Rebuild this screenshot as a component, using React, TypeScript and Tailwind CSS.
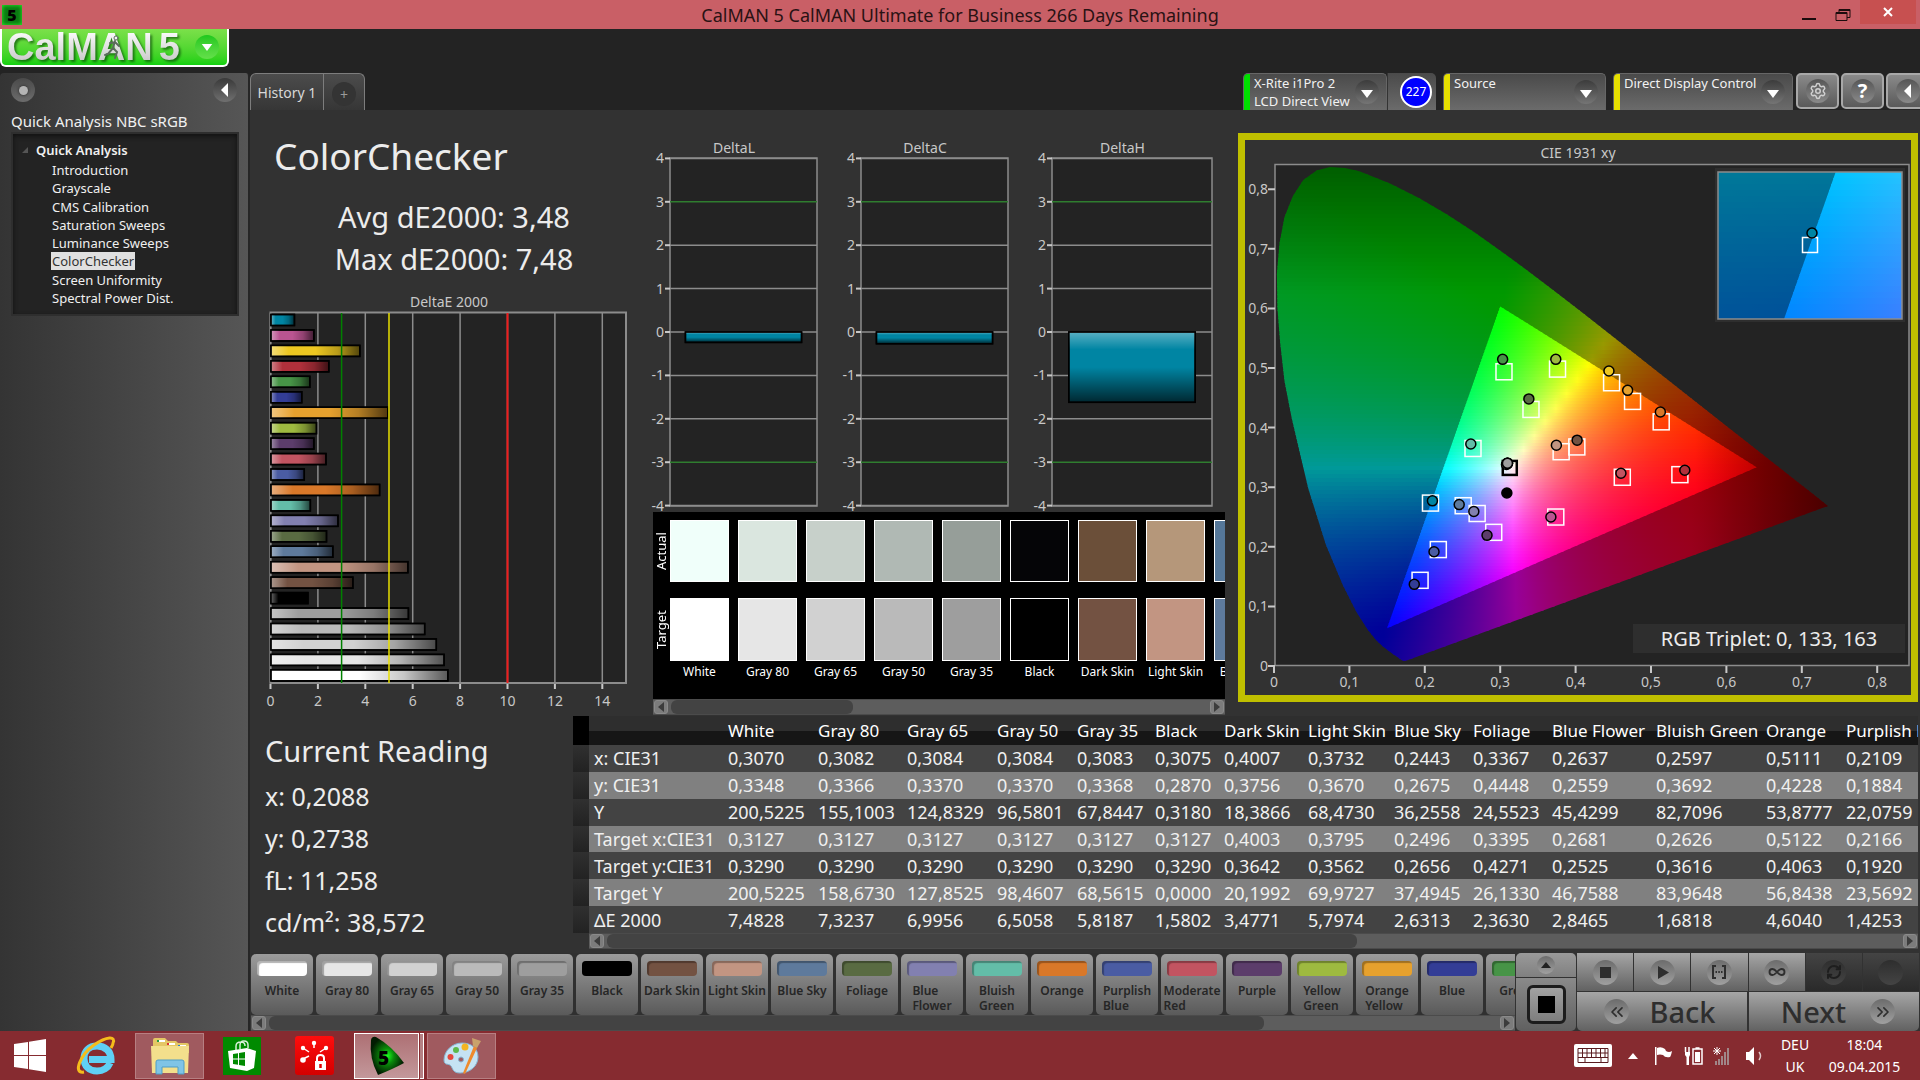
import { useState } from "react";
import type { ReactNode } from "react";
import { ChevronsLeft, ChevronsRight, Infinity as InfinityIcon, RefreshCw, Settings } from "lucide-react";

interface Patch {
  name: string;
  color: string;
  actual: string;
  de: number;
  xy: [number, number];
  target: [number, number];
}

const patches: Patch[] = [
  { name: "White", color: "#ffffff", actual: "#f0fffa", de: 7.4828, xy: [0.307, 0.3348], target: [0.3127, 0.329] },
  { name: "Gray 80", color: "#e6e6e6", actual: "#dae6df", de: 7.3237, xy: [0.3082, 0.3366], target: [0.3127, 0.329] },
  { name: "Gray 65", color: "#d1d1d1", actual: "#c7d0ca", de: 6.9956, xy: [0.3084, 0.337], target: [0.3127, 0.329] },
  { name: "Gray 50", color: "#bababa", actual: "#b0b9b4", de: 6.5058, xy: [0.3084, 0.337], target: [0.3127, 0.329] },
  { name: "Gray 35", color: "#9e9e9e", actual: "#969e99", de: 5.8187, xy: [0.3083, 0.3368], target: [0.3127, 0.329] },
  { name: "Black", color: "#000000", actual: "#050507", de: 1.5802, xy: [0.3075, 0.287], target: [0.3127, 0.329] },
  { name: "Dark Skin", color: "#735242", actual: "#6b4f39", de: 3.4771, xy: [0.4007, 0.3756], target: [0.4003, 0.3642] },
  { name: "Light Skin", color: "#c29582", actual: "#b5977a", de: 5.7974, xy: [0.3732, 0.367], target: [0.3795, 0.3562] },
  { name: "Blue Sky", color: "#5e7a9c", actual: "#557799", de: 2.6313, xy: [0.2443, 0.2675], target: [0.2496, 0.2656] },
  { name: "Foliage", color: "#596b42", actual: "#566b3c", de: 2.363, xy: [0.3367, 0.4448], target: [0.3395, 0.4271] },
  { name: "Blue Flower", color: "#8280b0", actual: "#7a7fae", de: 2.8465, xy: [0.2637, 0.2559], target: [0.2681, 0.2525] },
  { name: "Bluish Green", color: "#63bda8", actual: "#5cbfa5", de: 1.6818, xy: [0.2597, 0.3692], target: [0.2626, 0.3616] },
  { name: "Orange", color: "#d97829", actual: "#d07a20", de: 4.604, xy: [0.5111, 0.4228], target: [0.5122, 0.4063] },
  { name: "Purplish Blue", color: "#4a5ca3", actual: "#455ca3", de: 1.4253, xy: [0.2109, 0.1884], target: [0.2166, 0.192] },
  { name: "Moderate Red", color: "#c25461", actual: "#bb555e", de: 2.34, xy: [0.4588, 0.32], target: [0.4606, 0.3133] },
  { name: "Purple", color: "#5c3d6b", actual: "#573c6a", de: 1.83, xy: [0.2812, 0.2159], target: [0.2901, 0.2209] },
  { name: "Yellow Green", color: "#9eba40", actual: "#99bd38", de: 1.94, xy: [0.3724, 0.5112], target: [0.3747, 0.4948] },
  { name: "Orange Yellow", color: "#e6a12e", actual: "#dfa422", de: 4.95, xy: [0.4677, 0.4592], target: [0.4742, 0.4406] },
  { name: "Blue", color: "#333d96", actual: "#303c97", de: 1.32, xy: [0.1847, 0.1337], target: [0.1924, 0.1404] },
  { name: "Green", color: "#479447", actual: "#42963f", de: 1.66, xy: [0.3019, 0.5112], target: [0.3037, 0.4903] },
  { name: "Red", color: "#b0303b", actual: "#a83138", de: 2.46, xy: [0.5435, 0.325], target: [0.537, 0.3177] },
  { name: "Yellow", color: "#edc721", actual: "#e6c916", de: 3.77, xy: [0.4429, 0.4916], target: [0.4464, 0.4719] },
  { name: "Magenta", color: "#ba5491", actual: "#b4548f", de: 1.83, xy: [0.3659, 0.2466], target: [0.3724, 0.2466] },
  { name: "Cyan", color: "#0085a3", actual: "#0085a3", de: 1.01, xy: [0.2088, 0.2738], target: [0.2062, 0.27] },
];

const tableHead = ["White", "Gray 80", "Gray 65", "Gray 50", "Gray 35", "Black", "Dark Skin", "Light Skin", "Blue Sky", "Foliage", "Blue Flower", "Bluish Green", "Orange", "Purplish Blue"];

const colWidths = [
  "w-[134px]", "w-[90px]", "w-[89px]", "w-[90px]", "w-[80px]", "w-[78px]", "w-[69px]", "w-[84px]",
  "w-[86px]", "w-[79px]", "w-[79px]", "w-[104px]", "w-[110px]", "w-[80px]", "w-[114px]",
];

const tableRows = [
  { label: "x: CIE31", values: "0,3070 0,3082 0,3084 0,3084 0,3083 0,3075 0,4007 0,3732 0,2443 0,3367 0,2637 0,2597 0,5111 0,2109" },
  { label: "y: CIE31", values: "0,3348 0,3366 0,3370 0,3370 0,3368 0,2870 0,3756 0,3670 0,2675 0,4448 0,2559 0,3692 0,4228 0,1884" },
  { label: "Y", values: "200,5225 155,1003 124,8329 96,5801 67,8447 0,3180 18,3866 68,4730 36,2558 24,5523 45,4299 82,7096 53,8777 22,0759" },
  { label: "Target x:CIE31", values: "0,3127 0,3127 0,3127 0,3127 0,3127 0,3127 0,4003 0,3795 0,2496 0,3395 0,2681 0,2626 0,5122 0,2166" },
  { label: "Target y:CIE31", values: "0,3290 0,3290 0,3290 0,3290 0,3290 0,3290 0,3642 0,3562 0,2656 0,4271 0,2525 0,3616 0,4063 0,1920" },
  { label: "Target Y", values: "200,5225 158,6730 127,8525 98,4607 68,5615 0,0000 20,1992 69,9727 37,4945 26,1330 46,7588 83,9648 56,8438 23,5692" },
  { label: "ΔE 2000", values: "7,4828 7,3237 6,9956 6,5058 5,8187 1,5802 3,4771 5,7974 2,6313 2,3630 2,8465 1,6818 4,6040 1,4253" },
];

const pages = ["Introduction", "Grayscale", "CMS Calibration", "Saturation Sweeps", "Luminance Sweeps", "ColorChecker", "Screen Uniformity", "Spectral Power Dist."];

// CIE 1931 spectral locus, 380nm to 700nm
const locus: [number, number][] = [
  [0.1741, 0.005], [0.1714, 0.0051], [0.1689, 0.0069], [0.1644, 0.0109], [0.1566, 0.0177], [0.144, 0.0297], [0.1355, 0.0399],
  [0.1241, 0.0578], [0.1096, 0.0868], [0.0913, 0.1327], [0.0687, 0.2007], [0.0454, 0.295], [0.0235, 0.4127], [0.0139, 0.475],
  [0.0082, 0.5384], [0.0045, 0.598], [0.0039, 0.6548], [0.0073, 0.706], [0.0139, 0.7502], [0.025, 0.785], [0.0389, 0.812],
  [0.0565, 0.828], [0.0743, 0.8338], [0.0943, 0.832], [0.1142, 0.8262], [0.1547, 0.8059], [0.1929, 0.7816], [0.2296, 0.7543],
  [0.2658, 0.7243], [0.3016, 0.6923], [0.3373, 0.6589], [0.3731, 0.6245], [0.4087, 0.5896], [0.4441, 0.5547], [0.4788, 0.5202],
  [0.5125, 0.4866], [0.5448, 0.4544], [0.5752, 0.4242], [0.6029, 0.3965], [0.627, 0.3725], [0.6482, 0.3514], [0.6658, 0.334],
  [0.6915, 0.3083], [0.714, 0.2859], [0.7347, 0.2653],
];

const srgb: [number, number][] = [[0.64, 0.33], [0.3, 0.6], [0.15, 0.06]];

function xyColor(x: number, y: number, level: number) {
  const yy = Math.max(y, 0.005);
  const X = x / yy;
  const Z = (1 - x - yy) / yy;
  const rgb = [
    3.2406 * X - 1.5372 - 0.4986 * Z,
    -0.9689 * X + 1.8758 + 0.0415 * Z,
    0.0557 * X - 0.204 + 1.057 * Z,
  ].map((v) => Math.max(v, 0));
  const top = Math.max(...rgb);
  let k = level;
  if (x > 0.56) k *= 1 - (x - 0.56) * 3;
  if (y > 0.62) k *= 1 - (y - 0.62) * 1.8;
  const [r, g, b] = rgb.map((v) => Math.round((v / top) * 255 * k));
  return `rgb(${r},${g},${b})`;
}

interface FieldProps {
  id: string;
  left: number;
  top: number;
  width: number;
  height: number;
  toXY: (px: number, py: number) => [number, number];
  level: number;
  clip: string;
  rowHeight: number;
}

function ColorField({ id, left, top, width, height, toXY, level, clip, rowHeight }: FieldProps) {
  const rows = Math.ceil(height / rowHeight);
  const steps = Math.ceil(width / 11);
  return (
    <g clipPath={`url(#${clip})`}>
      {Array.from({ length: rows }, (_, r) => {
        const py = top + r * rowHeight;
        return (
          <g key={r}>
            <linearGradient id={`${id}-${r}`}>
              {Array.from({ length: steps + 1 }, (_, s) => {
                const [x, y] = toXY(left + (width * s) / steps, py + rowHeight / 2);
                return <stop key={s} offset={s / steps} stopColor={xyColor(x, y, level)} />;
              })}
            </linearGradient>
            <rect x={left} y={py} width={width} height={rowHeight + 1} fill={`url(#${id}-${r})`} />
          </g>
        );
      })}
    </g>
  );
}

function CieChart() {
  const px = (x: number) => 36 + x * 754;
  const py = (y: number) => 531 - y * 596;
  const toXY = (a: number, b: number): [number, number] => [(a - 36) / 754, (531 - b) / 596];
  const zoomX = (x: number) => 567 + (x - 0.207) * 754 * 5;
  const zoomY = (y: number) => 112 - (y - 0.27) * 596 * 5;
  const zoomToXY = (a: number, b: number): [number, number] => [0.207 + (a - 567) / 3770, 0.27 - (b - 112) / 2980];
  const points = (list: [number, number][]) => list.map(([x, y]) => `${px(x).toFixed(1)},${py(y).toFixed(1)}`).join(" ");
  const cyan = patches[patches.length - 1];

  return (
    <svg viewBox="0 0 680 569" className="block h-auto w-full" fontSize="14" fill="#c8c8c8" role="img" aria-label="CIE 1931 xy">
      <defs>
        <clipPath id="locus"><polygon points={points(locus)} /></clipPath>
        <clipPath id="gamut"><polygon points={points(srgb)} /></clipPath>
        <clipPath id="inset"><rect x="480" y="39" width="184" height="147" /></clipPath>
        <clipPath id="inset-gamut">
          <polygon points={`${zoomX(0.15)},${zoomY(0.06)} ${zoomX(0.3)},${zoomY(0.6)} 664,-900 664,900`} />
        </clipPath>
      </defs>
      <rect x="3.5" y="3.5" width="673" height="562" fill="#323232" stroke="#bfbf00" strokeWidth="7" />
      <text x="340" y="25" textAnchor="middle">CIE 1931 xy</text>
      <rect x="37" y="31.5" width="634" height="501" fill="#232323" stroke="#8c8c8c" strokeWidth="1.5" />
      <ColorField id="outer" left={36} top={33} width={560} height={498} toXY={toXY} level={0.6} clip="locus" rowHeight={4} />
      <ColorField id="inner" left={146} top={172} width={376} height={325} toXY={toXY} level={1} clip="gamut" rowHeight={3} />

      {[0, 1, 2, 3, 4, 5, 6, 7, 8].map((n) => (
        <g key={n}>
          <path d={`M${px(n / 10)} 533v7M${30} ${py(n / 10) + 2}h7`} stroke="#c8c8c8" strokeWidth="2" />
          <text x={px(n / 10)} y="554" textAnchor="middle">{n ? `0,${n}` : "0"}</text>
          <text x="30" y={py(n / 10) + 7} textAnchor="end">{n ? `0,${n}` : "0"}</text>
        </g>
      ))}

      {patches.slice(6).map((p) => (
        <rect key={p.name} x={px(p.target[0]) - 7} y={py(p.target[1]) - 8} width="16" height="16" fill="none" stroke="#fff" strokeWidth="1.5" />
      ))}
      <rect x={px(0.3127) - 7} y={py(0.329) - 7} width="14" height="14" fill="none" stroke="#000" strokeWidth="2.5" />
      {patches.map((p) => (
        <circle key={p.name} cx={px(p.xy[0]) + 1} cy={py(p.xy[1])} r="5" fill={p.color} stroke="#000" strokeWidth="1.5" />
      ))}

      <rect x="477" y="35" width="190" height="154" fill="#2e2e2e" />
      <g clipPath="url(#inset)">
        <ColorField id="zoomed-out" left={480} top={39} width={184} height={147} toXY={zoomToXY} level={0.6} clip="inset" rowHeight={6} />
        <ColorField id="zoomed-in" left={480} top={39} width={184} height={147} toXY={zoomToXY} level={1} clip="inset-gamut" rowHeight={6} />
      </g>
      <rect x="480" y="39" width="184" height="147" fill="none" stroke="#8c8c8c" strokeWidth="1.5" />
      <rect x="564.5" y="104.5" width="15" height="15" fill="none" stroke="#fff" strokeWidth="1.5" />
      <circle cx="574" cy="100" r="5" fill={cyan.color} stroke="#000" strokeWidth="1.5" />

      <rect x="395" y="491" width="272" height="29" fill="#2e2e2e" />
      <text x="531" y="513" textAnchor="middle" fontSize="20" fill="#ececec">RGB Triplet: 0, 133, 163</text>
    </svg>
  );
}

function DeltaEChart() {
  const px = (v: number) => 20.5 + v * 23.7;
  return (
    <svg viewBox="0 0 400 425" className="block h-auto w-full" fontSize="14" fill="#c8c8c8" role="img" aria-label="DeltaE 2000">
      <defs>
        <linearGradient id="shade-x">
          <stop offset="0" stopColor="#fff" stopOpacity="0.4" />
          <stop offset="0.2" stopColor="#fff" stopOpacity="0" />
          <stop offset="0.5" stopColor="#000" stopOpacity="0" />
          <stop offset="0.75" stopColor="#000" stopOpacity="0.22" />
          <stop offset="1" stopColor="#000" stopOpacity="0.65" />
        </linearGradient>
      </defs>
      <text x="199" y="17" textAnchor="middle">DeltaE 2000</text>
      <rect x="20.5" y="22.5" width="355.5" height="370.5" fill="#232323" stroke="#8c8c8c" strokeWidth="2" />
      {[0, 2, 4, 6, 8, 10, 12, 14].map((n) => (
        <g key={n}>
          <path d={`M${px(n)} 23v370`} stroke="#8c8c8c" strokeWidth="1.5" />
          <path d={`M${px(n)} 394v5`} stroke="#c8c8c8" strokeWidth="2" />
          <text x={px(n)} y="416" textAnchor="middle">{n}</text>
        </g>
      ))}
      {[...patches].reverse().map((p, i) => (
        <g key={p.name} stroke="#000" strokeWidth="1.5">
          <rect x="21" y={24.5 + i * 15.45} width={p.de * 23.7 - 0.5} height="11" fill={p.color} />
          <rect x="21" y={24.5 + i * 15.45} width={p.de * 23.7 - 0.5} height="11" fill="url(#shade-x)" />
        </g>
      ))}
      <path d={`M${px(3)} 23v370`} stroke="#008000" strokeWidth="1.5" />
      <path d={`M${px(5)} 23v370`} stroke="#e8e000" strokeWidth="1.5" />
      <path d={`M${px(10)} 23v370`} stroke="#f01c1c" strokeWidth="2" />
    </svg>
  );
}

function DeltaChart({ title, value, width }: { title: string; value: number; width: number }) {
  const plot = width - 21;
  const py = (v: number) => 194 - v * 43.4;
  return (
    <svg viewBox={`0 0 ${width} 374`} className="block h-auto w-full overflow-visible" fontSize="14" fill="#c8c8c8" role="img" aria-label={title}>
      <defs>
        <linearGradient id="shade-y" x2="0" y2="1">
          <stop offset="0" stopColor="#fff" stopOpacity="0.35" />
          <stop offset="0.25" stopColor="#fff" stopOpacity="0" />
          <stop offset="0.5" stopColor="#000" stopOpacity="0" />
          <stop offset="1" stopColor="#000" stopOpacity="0.7" />
        </linearGradient>
      </defs>
      <text x={width / 2} y="15" textAnchor="middle">{title}</text>
      <rect x="20" y="20" width={plot} height="348" fill="#232323" stroke="#8c8c8c" strokeWidth="1.5" />
      {[4, 3, 2, 1, 0, -1, -2, -3, -4].map((n) => (
        <g key={n}>
          <path d={`M20 ${py(n)}h${plot}`} stroke={Math.abs(n) === 3 ? "#2f7d2f" : "#8c8c8c"} strokeWidth="1.5" />
          <path d={`M15 ${py(n)}h5`} stroke="#c8c8c8" strokeWidth="2" />
          <text x="14" y={py(n) + 5} textAnchor="end">{n}</text>
        </g>
      ))}
      <g stroke="#000" strokeWidth="1.5">
        <rect x={20 + plot * 0.105} y="194" width={plot * 0.79} height={-value * 43.4} fill="#0085a3" />
        <rect x={20 + plot * 0.105} y="194" width={plot * 0.79} height={-value * 43.4} fill="url(#shade-y)" />
      </g>
    </svg>
  );
}

function Scrollbar({ thumb, label }: { thumb: string; label: string }) {
  return (
    <div className="flex h-4 items-center gap-[3px] border-y border-[#4b4b4b] bg-[#5d5d5d] px-px" role="group" aria-label={label}>
      <button aria-label="Scroll left" className="flex h-[14px] w-[14px] items-center justify-center rounded-[3px] border border-[#8a8a8a] bg-[#7c7c7c]">
        <svg viewBox="0 0 8 10" className="h-[10px] w-2"><path d="M7 0v10L1 5z" fill="#3c3c3c" /></svg>
      </button>
      <div className="h-full flex-1">
        <div className={`h-full rounded-[6px] bg-[#434343] ${thumb}`} />
      </div>
      <button aria-label="Scroll right" className="flex h-[14px] w-[14px] items-center justify-center rounded-[3px] border border-[#8a8a8a] bg-[#7c7c7c]">
        <svg viewBox="0 0 8 10" className="h-[10px] w-2"><path d="M1 0v10l6-5z" fill="#3c3c3c" /></svg>
      </button>
    </div>
  );
}

function TitleBar() {
  return (
    <header className="flex h-[29px] items-center justify-between bg-[#c95f66] text-[#2a1214]">
      <div className="w-[136px] pl-0.5">
        <div className="flex h-5 w-5 items-center justify-center bg-[#0c7a12] text-[16px] leading-5 font-black text-black shadow-[inset_0_0_4px_#2bff2b]">5</div>
      </div>
      <h1 className="text-[18px] leading-6">CalMAN 5 CalMAN Ultimate for Business 266 Days Remaining</h1>
      <div className="flex h-full w-[136px] justify-end">
        <button aria-label="Minimize" className="flex w-[34px] items-center justify-center">
          <svg viewBox="0 0 14 14" className="h-[14px] w-[14px]"><path d="M0 11h14" stroke="#1c0c0d" strokeWidth="2" /></svg>
        </button>
        <button aria-label="Restore" className="flex w-[34px] items-center justify-center">
          <svg viewBox="0 0 16 14" className="h-[14px] w-4" fill="none" stroke="#1c0c0d"><path d="M1 4.500h11v8H1zM1 5.500h11M4 4V1.500h11v8h-3M4 2.500h11" /></svg>
        </button>
        <button aria-label="Close" className="mr-1 flex h-[24px] w-[56px] items-center justify-center bg-[#c75050]">
          <svg viewBox="0 0 10 10" className="h-[10px] w-[10px]"><path d="M1 1l8 8M9 1L1 9" stroke="#fff" strokeWidth="2" /></svg>
        </button>
      </div>
    </header>
  );
}

function DownArrow({ label }: { label: string }) {
  return (
    <button aria-label={label} className="flex h-6 w-6 shrink-0 items-center justify-center rounded-full bg-linear-to-b from-[#3c3c3c] to-[#757575]">
      <svg viewBox="0 0 12 8" className="mt-1 h-2 w-3"><path d="M0 0h12L6 8z" fill="#fff" /></svg>
    </button>
  );
}

function DeviceTab({ strip, width, label, children }: { strip: string; width: string; label: string; children: ReactNode }) {
  return (
    <div className={`flex h-full rounded-t-[5px] border border-b-0 border-[#666] bg-linear-to-b from-[#4a4a4a] to-[#6b6b6b] ${width}`}>
      <div className={`w-[6px] rounded-tl-[4px] ${strip}`} />
      <div className="flex-1 pl-1 text-[13px] leading-[18px] whitespace-nowrap text-[#f2f2f2]">{children}</div>
      <div className="flex items-center pr-[7px]">
        <DownArrow label={label} />
      </div>
    </div>
  );
}

function RoundButton({ label, children }: { label: string; children: ReactNode }) {
  return (
    <button aria-label={label} className="flex h-9 w-[43px] shrink-0 items-center justify-center rounded-[5px] border-2 border-[#a8a8a8] bg-linear-to-b from-[#8a8a8a] to-[#5a5a5a]">
      <span className="flex h-6 w-6 items-center justify-center rounded-full bg-linear-to-b from-[#565656] to-[#8a8a8a] text-[20px] leading-6 font-bold text-white">
        {children}
      </span>
    </button>
  );
}

function TabBar() {
  return (
    <div className="flex h-[37px] justify-between">
      <div className="flex rounded-t-[6px] border border-b-0 border-[#7d7d7d] bg-linear-to-b from-[#4c4c4c] to-[#363636] text-[14px] text-[#d8d8d8]">
        <button className="w-[73px] border-r border-[#7d7d7d]">History 1</button>
        <button aria-label="Add history" className="flex w-[40px] items-center justify-center">
          <span className="mt-1 flex h-6 w-6 items-center justify-center rounded-full bg-[#343434] text-[#9a9a9a]">+</span>
        </button>
      </div>
      <div className="flex gap-[7px] overflow-hidden">
        <div className="flex">
          <DeviceTab strip="bg-[#00e000]" width="w-[144px]" label="Meter menu">
            X-Rite i1Pro 2
            <br />
            LCD Direct View
          </DeviceTab>
          <div className="flex w-[49px] items-center justify-center rounded-tr-[5px] border-l border-[#333] bg-linear-to-b from-[#4a4a4a] to-[#6b6b6b] pl-2">
            <div className="flex h-8 w-8 items-center justify-center rounded-full border-2 border-white bg-[#0000ff] text-[12px] text-white">227</div>
          </div>
        </div>
        <DeviceTab strip="bg-[#e6e000]" width="w-[163px]" label="Source menu">Source</DeviceTab>
        <DeviceTab strip="bg-[#e6e000]" width="w-[180px]" label="Display menu">Direct Display Control</DeviceTab>
        <div className="-ml-1 flex w-[124px] gap-[2px] overflow-hidden">
          <RoundButton label="Settings"><Settings className="h-[18px] w-[18px] text-[#d0d0d0]" /></RoundButton>
          <RoundButton label="Help">?</RoundButton>
          <RoundButton label="Collapse">
            <svg viewBox="0 0 8 14" className="h-[14px] w-2"><path d="M7 0v14L0 7z" fill="#fff" /></svg>
          </RoundButton>
        </div>
      </div>
    </div>
  );
}

function Sidebar({ page, onSelect }: { page: string; onSelect: (p: string) => void }) {
  return (
    <aside className="w-[250px] shrink-0 rounded-t-[4px] border-r-2 border-[#262626] bg-linear-to-r from-[#343434] to-[#565656] px-[11px]">
      <div className="flex justify-between pt-[5px]">
        <button aria-label="Record" className="flex h-6 w-6 items-center justify-center rounded-full bg-linear-to-b from-[#4a4a4a] to-[#6c6c6c]">
          <span className="h-[9px] w-[9px] rounded-full bg-[#b4b4b4] shadow-[0_0_3px_#222]" />
        </button>
        <button aria-label="Collapse sidebar" className="flex h-6 w-6 items-center justify-center rounded-full bg-linear-to-b from-[#3a3a3a] to-[#707070]">
          <svg viewBox="0 0 8 14" className="h-[14px] w-2"><path d="M7 0v14L0 7z" fill="#fff" /></svg>
        </button>
      </div>
      <h2 className="mt-2 text-[15px] leading-[22px] whitespace-nowrap text-[#f0f0f0]">Quick Analysis NBC sRGB</h2>
      <nav className="-mr-0.5 h-[184px] border-2 border-[#2e2e2e] bg-[#232323] text-[13px] leading-[18px] text-[#f0f0f0] shadow-[inset_0_2px_5px_#111]">
        <div className="flex items-center gap-2 pt-[7px] pl-[9px] font-semibold">
          <svg viewBox="0 0 6 6" className="h-[6px] w-[6px]"><path d="M6 0v6H0z" fill="#555" /></svg>
          Quick Analysis
        </div>
        <ul className="mt-[2px] grid h-[146px] auto-rows-fr pl-[39px]">
          {pages.map((p) => (
            <li key={p} className="flex items-center">
              <a
                href="#"
                onClick={() => onSelect(p)}
                className={p === page ? "-mx-px bg-[#e0e0e0] px-px text-[#333]" : ""}
              >
                {p}
              </a>
            </li>
          ))}
        </ul>
      </nav>
    </aside>
  );
}

function Swatches() {
  return (
    <div className="mr-[13px] ml-[3px]">
      <div className="flex h-[187px] overflow-hidden bg-black pt-2 text-[12px] text-white">
        <div className="flex w-[17px] shrink-0 flex-col gap-4 text-[13px] leading-[17px]">
          <div className="h-[62px] rotate-180 text-center [writing-mode:vertical-rl]">Actual</div>
          <div className="h-[63px] rotate-180 text-center [writing-mode:vertical-rl]">Target</div>
        </div>
        {patches.slice(0, 9).map((p) => (
          <div key={p.name} className="w-[68px] shrink-0">
            <div className="h-[62px] w-[59px] border border-white" style={{ backgroundColor: p.actual }} />
            <div className="mt-4 h-[63px] w-[59px] border border-white" style={{ backgroundColor: p.color }} />
            <div className="-mx-1 w-[67px] text-center leading-[22px] whitespace-nowrap">{p.name}</div>
          </div>
        ))}
      </div>
      <Scrollbar thumb="w-[34%]" label="Swatch scroll" />
    </div>
  );
}

function ReadingsTable() {
  return (
    <div className="min-w-0 flex-1 overflow-hidden pr-[2px]">
      <div className="overflow-hidden">
        <table className="h-[217px] w-[1366px] table-fixed border-collapse text-left text-[18px] leading-6 text-[#f0f0f0]">
          <colgroup>
            <col className="w-4" />
            {colWidths.map((w, i) => <col key={i} className={w} />)}
          </colgroup>
          <thead>
            <tr className="h-[29px] bg-linear-to-b from-[#2e2e2e] from-50% to-[#161616] to-50% text-[17px] text-white">
              <td className="bg-black" />
              <td />
              {tableHead.map((h) => (
                <th key={h} scope="col" className="pl-[5px] font-normal whitespace-nowrap">{h}</th>
              ))}
            </tr>
          </thead>
          <tbody>
            {tableRows.map((row, i) => (
              <tr key={row.label} className={i % 2 ? "bg-[#808080]" : "bg-[#434343]"}>
                <td className="bg-linear-to-b from-[#303030] to-[#222]" />
                <th scope="row" className="pl-[5px] font-normal whitespace-nowrap">{row.label}</th>
                {row.values.split(" ").map((v, j) => (
                  <td key={j} className="pl-[5px] whitespace-nowrap">{v}</td>
                ))}
              </tr>
            ))}
          </tbody>
        </table>
      </div>
      <div className="ml-4">
        <Scrollbar thumb="w-[58%]" label="Table scroll" />
      </div>
    </div>
  );
}

function Disc({ size, children }: { size: string; children?: ReactNode }) {
  return <span className={`flex items-center justify-center rounded-full bg-linear-to-b from-[#6c6c6c] to-[#a0a0a0] ${size}`}>{children}</span>;
}

function Transport() {
  const button = "flex items-center justify-center bg-linear-to-b from-[#a6a6a6] to-[#626262] text-[#2e2e2e]";
  const off = "flex items-center justify-center bg-linear-to-b from-[#444] to-[#2a2a2a] text-[#1e1e1e]";
  const dim = "flex h-[25px] w-[25px] items-center justify-center rounded-full bg-linear-to-b from-[#2e2e2e] to-[#444]";
  return (
    <div className="flex shrink-0 gap-px pr-px">
      <div className="flex w-[60px] flex-col gap-px">
        <button aria-label="Expand" className="flex h-6 items-center justify-center rounded-t-[5px] bg-linear-to-b from-[#9a9a9a] to-[#808080]">
          <Disc size="h-[18px] w-[18px]">
            <svg viewBox="0 0 10 6" className="h-[6px] w-[10px]"><path d="M0 6h10L5 0z" fill="#222" /></svg>
          </Disc>
        </button>
        <button aria-label="Pattern window" className="flex flex-1 items-center justify-center rounded-b-[5px] bg-linear-to-b from-[#8a8a8a] to-[#606060]">
          <span className="flex h-[39px] w-[39px] items-center justify-center rounded-[6px] border-[3px] border-[#1c1c1c] bg-linear-to-b from-[#a2a2a2] to-[#7e7e7e]">
            <span className="h-[17px] w-[17px] bg-black" />
          </span>
        </button>
      </div>
      <div className="flex w-[342px] flex-col gap-px">
        <div className="grid h-[38px] grid-cols-6 gap-px">
          <button aria-label="Stop" className={button}><Disc size="h-[25px] w-[25px]"><span className="h-[11px] w-[11px] bg-[#2e2e2e]" /></Disc></button>
          <button aria-label="Play" className={button}>
            <Disc size="h-[25px] w-[25px]"><svg viewBox="0 0 12 14" className="ml-0.5 h-[13px] w-[11px]"><path d="M0 0l12 7-12 7z" fill="#2e2e2e" /></svg></Disc>
          </button>
          <button aria-label="Step" className={button}>
            <Disc size="h-[25px] w-[25px]">
              <svg viewBox="0 0 16 14" className="h-[14px] w-4" fill="none" stroke="#2e2e2e" strokeWidth="2"><path d="M5 1H2v12h3M11 1h3v12h-3M4.500 7h1.500M7.300 7h1.500M10 7h1.500" /></svg>
            </Disc>
          </button>
          <button aria-label="Loop" className={button}><Disc size="h-[25px] w-[25px]"><InfinityIcon className="h-[18px] w-[18px]" strokeWidth={2.5} /></Disc></button>
          <button aria-label="Refresh" className={off}><span className={dim}><RefreshCw className="h-4 w-4" strokeWidth={3} /></span></button>
          <button aria-label="Record" className={off}><span className={dim} /></button>
        </div>
        <div className="grid flex-1 grid-cols-2 gap-[2px] text-[29px] leading-8 font-medium">
          <button className={`${button} gap-5 rounded-bl-[5px] pr-1`}>
            <Disc size="h-[25px] w-[25px]"><ChevronsLeft className="h-5 w-5" /></Disc>
            Back
          </button>
          <button className={`${button} gap-6 rounded-br-[5px] pl-2`}>
            Next
            <Disc size="h-[25px] w-[25px]"><ChevronsRight className="h-5 w-5" /></Disc>
          </button>
        </div>
      </div>
    </div>
  );
}

function PatchStrip() {
  const [selected, setSelected] = useState("");
  return (
    <div className="mt-auto flex h-[78px] gap-px pl-px">
      <div className="flex min-w-0 flex-1 flex-col bg-[#303030]">
        <div className="flex flex-1 gap-[3px] overflow-hidden pt-px">
          {patches.slice(0, 20).map((p) => (
            <button
              key={p.name}
              onClick={() => setSelected(p.name)}
              className={`flex w-[62px] shrink-0 flex-col items-center rounded-[5px] bg-linear-to-b from-[#9c9c9c] to-[#5a5a5a] pt-[7px] ${selected === p.name ? "brightness-110" : ""}`}
            >
              <span className="h-[15px] w-[50px] rounded-[4px] shadow-[inset_2px_2px_1px_rgba(0,0,0,0.3)]" style={{ backgroundColor: p.color }} />
              <span className="mt-[7px] text-left text-[12px] leading-[15px] font-semibold text-[#262626]">
                {p.name.includes("Skin") || p.name.includes("Gray") || p.name.includes("Sky") ? (
                  <span className="whitespace-nowrap">{p.name}</span>
                ) : (
                  p.name.split(" ").map((word) => <span key={word} className="block">{word}</span>)
                )}
              </span>
            </button>
          ))}
        </div>
        <Scrollbar thumb="w-[81%]" label="Patch scroll" />
      </div>
      <Transport />
    </div>
  );
}

function Taskbar() {
  return (
    <footer className="flex h-[49px] items-center justify-between bg-[#862b30] text-white">
      <div className="flex h-full items-center">
        <button aria-label="Start" className="flex w-[60px] justify-center">
          <svg viewBox="0 0 32 33" className="h-[33px] w-8" fill="#fff"><path d="M0 5l14-2v13H0zM15 2.800L32 0v16H15zM0 17h14v13L0 28zM15 17h17v16l-17-2.800z" /></svg>
        </button>
        <button aria-label="Internet Explorer" className="flex w-[75px] justify-center pr-1">
          <svg viewBox="0 0 40 40" className="h-[40px] w-[40px]" fill="none">
            <path d="M34 27c-2 5-7 8-13 8-8 0-13-5-13-12.500S13 10 21 10s14 5 14 13.500H13" stroke="#5fd0f5" strokeWidth="7" />
            <path d="M8 36C-4 38 5 18 18 9S40 0 37 7c0 2-1 3-2 5" stroke="#f5bc1b" strokeWidth="3" />
          </svg>
        </button>
        <button aria-label="File Explorer" className="flex h-[46px] w-[69px] items-center justify-center border border-[#b77f82] bg-[#a05a5f]">
          <svg viewBox="0 0 40 38" className="h-[38px] w-10">
            <path d="M3 3q0-2 2-2h10l3 3h8l2 2h9q2 0 2 2v8H3z" fill="#e4c765" />
            <path d="M7 3h8v2H7zM17 6h8v2h-8zM28 8h8v2h-8z" fill="#fff" />
            <path d="M7 3h2v2H7z" fill="#2a9d44" /><path d="M17 6h2v2h-2z" fill="#d33" /><path d="M28 8h2v2h-2z" fill="#2b7fd0" />
            <path d="M1 9h38l-1 27H2z" fill="#f3df8c" />
            <path d="M6 25q0-2 2-2h24q2 0 2 2v12h-6v-7H12v7H6z" fill="#7fc4e6" stroke="#4f9dc6" />
          </svg>
        </button>
        <button aria-label="Store" className="ml-[19px] flex h-[38px] w-[38px] items-center justify-center bg-[#008a00]">
          <svg viewBox="0 0 30 32" className="h-8 w-[30px]">
            <path d="M9 10V6q0-4 5-4 4 0 4 4M13 9V5q0-4 4-4t4 4v3" fill="none" stroke="#d8f0d8" strokeWidth="1.500" />
            <path d="M1 11l19-3 9 3-2 17-7 3-17-3z" fill="#fff" />
            <path d="M6 14l5-.8v5.300H6zM12 13l6-1v6.500h-6zM6 19.500h5v5.300L6 24zM12 19.500h6V26l-6-1z" fill="#008a00" />
          </svg>
        </button>
        <button aria-label="Remote lock" className="ml-[34px] flex h-[39px] w-[39px] items-center justify-center rounded-[3px] bg-linear-to-b from-[#ff0d0d] to-[#d40000]">
          <svg viewBox="0 0 39 39" className="h-[39px] w-[39px]" fill="#fff" stroke="#fff">
            <path d="M19 7v5M8 12l6 4M31 12l-6 4M8 23l6-3" strokeWidth="1.500" />
            <g stroke="none"><circle cx="19" cy="7" r="2.200" /><circle cx="8" cy="12" r="2.200" /><circle cx="31" cy="12" r="2.200" /><circle cx="8" cy="24" r="2.800" /></g>
            <rect x="20" y="25" width="11" height="9" stroke="none" />
            <path d="M22 25v-3q0-3 3.500-3t3.500 3v3" fill="none" strokeWidth="2" />
            <path d="M25.500 28v4" stroke="#d00" strokeWidth="2.500" />
          </svg>
        </button>
        <div className="ml-5 flex h-[46px] gap-px">
          <button aria-label="CalMAN 5" className="flex w-[65px] items-center justify-center border border-white bg-linear-to-b from-[#ad7074] to-[#c3989b]">
            <svg viewBox="0 0 36 40" className="h-10 w-9">
              <defs><radialGradient id="tri"><stop offset="0" stopColor="#1fff1f" /><stop offset="0.400" stopColor="#0a8a0a" /><stop offset="1" stopColor="#021c02" /></radialGradient></defs>
              <path d="M2 4Q3 0 7 1q16 9 28 26-11 6-26 12Q0 22 2 4z" fill="url(#tri)" />
              <text x="9" y="29" fontSize="19" fontWeight="900">5</text>
            </svg>
          </button>
          <div className="w-1 border border-l-0 border-white bg-[#b58084]" />
        </div>
        <button aria-label="Paint" className="ml-[3px] flex h-[46px] w-[69px] items-center justify-center border border-[#b77f82] bg-[#a05a5f]">
          <svg viewBox="0 0 38 38" className="h-[38px] w-[38px]">
            <path d="M19 6C9 6 1 14 1 23c0 6 5 3 7 6s2 7 9 7c10 0 18-7 18-16S28 6 19 6zm-1 14a2.500 2.500 0 110 5 2.500 2.500 0 010-5z" fill="#c5e2f3" stroke="#86b5d2" />
            <circle cx="7.500" cy="20" r="3" fill="#e5473c" /><circle cx="13" cy="13" r="3" fill="#5cb84a" /><circle cx="22" cy="10" r="3.500" fill="#f3b321" />
            <path d="M31 9l3 2-12 26-2-1z" fill="#ee8a2c" />
            <path d="M29 1l9 3-4 7-4-2z" fill="#c9a26b" />
          </svg>
        </button>
      </div>
      <div className="flex h-full items-center">
        <svg viewBox="0 0 38 23" className="mr-4 h-[23px] w-[38px]">
          <rect width="38" height="23" rx="2" fill="#fff" />
          <path d="M4 4.500h30v14H4zM4 9h30M4 13.500h30M8.500 4.500v9M13 4.500v9M17.500 4.500v9M22 4.500v9M26.500 4.500v9M31 4.500v9M11 14v5M27 14v5" fill="none" stroke="#5a1c20" />
        </svg>
        <svg viewBox="0 0 10 6" className="mr-4 h-[6px] w-[10px]"><path d="M0 6h10L5 0z" fill="#fff" /></svg>
        <svg viewBox="0 0 19 20" className="mr-[11px] h-5 w-[19px]"><path d="M1 1h1.500v18H1zM3 2q4-2 8 1l1 2q3 2 6 0-1 5-2 6-5 1-7-2-3-1-6 0z" fill="#fff" /></svg>
        <svg viewBox="0 0 19 20" className="mr-[10px] h-5 w-[19px]" fill="none" stroke="#fff" strokeWidth="1.500">
          <path d="M1.500 1v5M5 1v5M9 3h9v15H9zM11.500 2h4" /><path d="M1 6h5v3l-1 2v8H2.500v-8L1 9z" fill="#fff" stroke="none" /><path d="M11 6h5v10h-5z" fill="#fff" stroke="none" />
        </svg>
        <svg viewBox="0 0 18 20" className="mr-[14px] h-5 w-[18px]">
          <path d="M2 15h2v4H2zM5 13h2v6H5zM8 10h2v9H8zM11 6h2v13h-2zM14 2h2v17h-2z" fill="#a08688" />
          <path d="M4 1v8M0 5h8M1 2l6 6M7 2L1 8" stroke="#fff" />
        </svg>
        <svg viewBox="0 0 18 20" className="mr-[15px] h-5 w-[18px]"><path d="M1 6h3l5-5v18l-5-5H1z" fill="#fff" /><path d="M14 6q3 4 0 8" fill="none" stroke="#e0c8ca" strokeWidth="1.500" /></svg>
        <div className="w-[34px] text-center text-[14px] leading-[22px]">DEU<br />UK</div>
        <div className="ml-[15px] w-[75px] text-center text-[14px] leading-[22px]">18:04<br />09.04.2015</div>
        <div className="w-[18px]" />
      </div>
    </footer>
  );
}

function Logo() {
  const letters = "bg-linear-to-b from-white to-[#c4c4c4] bg-clip-text text-transparent drop-shadow-[2px_2px_1px_rgba(0,60,0,0.6)]";
  return (
    <button aria-label="CalMAN menu" className="relative flex h-[38px] w-[229px] items-center rounded-b-[6px] border-2 border-t-0 border-white bg-linear-to-b from-[#7be04a] to-[#10d010] pl-[5px] font-['Liberation_Sans',sans-serif] text-[38px] leading-[36px] font-bold">
      <span className={letters}>CalMAN</span>
      <span className={`ml-1.5 ${letters}`}>5</span>
      <span className="ml-[15px] flex h-6 w-6 items-center justify-center rounded-full bg-linear-to-b from-[#1cc81c] to-[#63e04a]">
        <svg viewBox="0 0 12 8" className="h-[7px] w-3"><path d="M0 0h12L6 8z" fill="#fff" /></svg>
      </span>
      {/* running figure over the second A */}
      <svg viewBox="0 0 22 28" className="absolute top-1 left-[101px] h-7 w-[22px]" fill="none" strokeLinecap="round">
        <path d="M12 8l-2 7 4 4-2 6M10 15l-5 6-3 1M7 10l5-1 4 4" stroke="#5c6b5c" strokeWidth="2" />
        <circle cx="13" cy="5" r="2" fill="#f4f4f4" stroke="#5c6b5c" />
      </svg>
    </button>
  );
}

export default function App() {
  const [page, setPage] = useState("ColorChecker");

  return (
    <div className="flex min-h-screen flex-col overflow-hidden bg-[#232323] font-['Noto_Sans','Open_Sans',sans-serif]">
      <TitleBar />
      <div className="h-[44px]">
        <Logo />
      </div>
      <div className="flex flex-1">
        <Sidebar page={page} onSelect={setPage} />
        <main className="flex min-w-0 flex-1 flex-col">
          <TabBar />
          <div className="flex flex-1 flex-col bg-[#323232]">
            <div className="grid grid-cols-[400fr_588fr_682fr]">
              <section className="min-w-0 text-[#ececec]">
                <h2 className="mt-5 pl-6 text-[37px] leading-[52px]">ColorChecker</h2>
                <div className="mt-[14px] h-[94px] pl-2 text-center text-[29px] leading-[42px]">
                  Avg dE2000: 3,48
                  <br />
                  Max dE2000: 7,48
                </div>
                <DeltaEChart />
              </section>
              <section className="min-w-0 pt-7">
                <div className="grid grid-cols-[168fr_168fr_181fr] gap-[23px] pr-[25px]">
                  <DeltaChart title="DeltaL" value={-0.24} width={168} />
                  <DeltaChart title="DeltaC" value={-0.27} width={168} />
                  <DeltaChart title="DeltaH" value={-1.62} width={181} />
                </div>
                <Swatches />
              </section>
              <section className="min-w-0 pt-[23px] pr-[2px]">
                <CieChart />
              </section>
            </div>
            <div className="flex pt-px">
              <section className="w-[323px] shrink-0 pt-[14px] pl-[15px] text-[25px] leading-[42px] text-[#ececec]">
                <h2 className="mb-[3px] text-[29px]">Current Reading</h2>
                <p>x: 0,2088</p>
                <p>y: 0,2738</p>
                <p>fL: 11,258</p>
                <p>cd/m²: 38,572</p>
              </section>
              <ReadingsTable />
            </div>
            <PatchStrip />
          </div>
        </main>
      </div>
      <Taskbar />
    </div>
  );
}
